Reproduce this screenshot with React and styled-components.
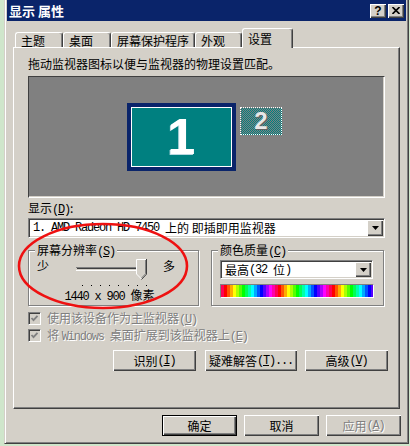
import React from 'react';
import styled, { createGlobalStyle } from 'styled-components';

const GlobalStyle = createGlobalStyle`
  html, body { margin: 0; padding: 0; }
  body {
    background: #cfe6cb;
    font-family: "Noto Sans CJK SC", "Noto Sans", sans-serif;
    font-size: 12px;
    color: #000;
  }
`;

const raised = `
  box-shadow: inset 1px 1px #fff, inset -1px -1px #404040, inset -2px -2px #808080;
`;

const sunken = `
  border: 1px solid;
  border-color: #808080 #fff #fff #808080;
  box-shadow: inset 1px 1px #404040, inset -1px -1px #d4d0c8;
`;

// rainbow stripes for the colour quality preview
const stripes = Array.from({ length: 18 }, (_, i) => {
  const h = (340 + i * 20) % 360;
  return `hsl(${h}, 100%, 50%) ${i * 3}px ${i * 3 + 3}px`;
}).join(', ');

const Window = styled.div`
  position: relative;
  box-sizing: border-box;
  width: 405px;
  height: 444px;
  margin-left: 4px;
  background: #d4d0c8;
  border-style: solid;
  border-width: 0 1px 1px 1px;
  border-color: #d4d0c8 #404040 #404040 #d4d0c8;
  box-shadow: inset 1px 0 #fff, inset -1px -1px #808080;
  padding: 0 2px 2px 2px;
  display: flex;
  flex-direction: column;
`;

const TitleBar = styled.div`
  box-sizing: border-box;
  height: 21px;
  background: #0a246a;
  display: flex;
  align-items: center;
  padding: 0 2px;
`;

const Title = styled.div`
  flex: 1;
  color: #fff;
  font-weight: bold;
  font-size: 13px;
  line-height: 15px;
  white-space: pre;
`;

const TitleButton = styled.div`
  box-sizing: border-box;
  width: 16px;
  height: 14px;
  background: #d4d0c8;
  ${raised}
  display: flex;
  align-items: center;
  justify-content: center;
  font-family: "Liberation Sans", Arial, sans-serif;
  font-weight: bold;
  font-size: 12px;
  line-height: 12px;
  & + & { margin-left: 2px; }
`;

const Body = styled.div`
  padding: 0 6px;
  display: flex;
  flex-direction: column;
`;

const TabRow = styled.div`
  display: flex;
  align-items: flex-end;
  height: 19px;
  margin-top: 7px;
  padding-left: 2px;
`;

const Tab = styled.div`
  position: relative;
  z-index: ${p => (p.$active ? 2 : 0)};
  box-sizing: border-box;
  width: ${p => p.$w}px;
  height: ${p => (p.$active ? 20 : 15)}px;
  margin-bottom: ${p => (p.$active ? -1 : 0)}px;
  padding: ${p => (p.$active ? 2 : 0)}px 0 0 5px;
  background: #d4d0c8;
  border-style: solid;
  border-width: 1px 1px 0 1px;
  border-color: #fff #404040 #fff #fff;
  border-radius: 3px 3px 0 0;
  box-shadow: inset -1px 0 #808080;
  line-height: 15px;
  white-space: nowrap;
`;

const Panel = styled.div`
  box-sizing: border-box;
  height: 362px;
  border: 1px solid;
  border-color: #fff #404040 #404040 #fff;
  box-shadow: inset -1px -1px #808080;
  padding: 0 14px;
  display: flex;
  flex-direction: column;
`;

const Desc = styled.div`
  margin-top: 9px;
  line-height: 14px;
`;

const MonitorArea = styled.div`
  position: relative;
  box-sizing: border-box;
  height: 122px;
  margin-top: 5px;
  background: #808080;
  border: 1px solid;
  border-color: #404040 #fff #fff #404040;
  box-shadow: inset -1px -1px #d4d0c8;
`;

const Monitor = styled.div`
  position: absolute;
  box-sizing: border-box;
  left: 98px;
  top: 26px;
  width: 109px;
  height: 68px;
  padding: 4px;
  background: #0a246a;
`;

const Screen = styled.div`
  box-sizing: border-box;
  height: 100%;
  border: 1px solid #fff;
  background: #008080;
  display: flex;
  align-items: center;
  justify-content: center;
  color: #fff;
  font-family: "Liberation Sans", Arial, sans-serif;
  font-weight: bold;
  font-size: 50px;
  line-height: 50px;
  text-shadow: -1px 1px 0 #b8d8e0;
`;

const GhostMonitor = styled.div`
  position: absolute;
  box-sizing: border-box;
  left: 211px;
  top: 30px;
  width: 42px;
  height: 28px;
  border: 1px dotted #fff;
  background: repeating-conic-gradient(#008080 0 25%, #808080 0 50%) 0 0 / 2px 2px;
  display: flex;
  align-items: center;
  justify-content: center;
  color: #e8e8e8;
  font-family: "Liberation Sans", Arial, sans-serif;
  font-weight: bold;
  font-size: 24px;
  line-height: 24px;
  text-shadow: 1px 1px 0 #606060;
`;

const FieldLabel = styled.div`
  margin-top: 3px;
  line-height: 14px;
`;

const Combo = styled.div`
  box-sizing: border-box;
  width: ${p => p.$w};
  height: ${p => p.$h}px;
  margin-top: ${p => p.$mt || 0}px;
  background: #fff;
  ${sunken}
  display: flex;
  align-items: stretch;
  padding: 1px 1px 1px 1px;
`;

const ComboText = styled.div`
  flex: 1;
  padding-left: 3px;
  display: flex;
  align-items: center;
  white-space: pre;
  overflow: hidden;
  line-height: 14px;
`;

const ComboButton = styled.div`
  box-sizing: border-box;
  width: 16px;
  background: #d4d0c8;
  ${raised}
  display: flex;
  align-items: center;
  justify-content: center;
`;

const Mono = styled.span`
  font-family: "Liberation Mono", "Courier New", monospace;
  font-size: 12px;
  letter-spacing: -1.2px;
`;

// accelerator key in brackets, e.g. (D)
const Acc = ({ k }) => (
  <Mono>(<u>{k}</u>)</Mono>
);

const GroupRow = styled.div`
  display: flex;
  gap: 12px;
  margin-top: 12px;
`;

const Group = styled.div`
  position: relative;
  box-sizing: border-box;
  width: ${p => p.$w}px;
  height: 56px;
  border: 1px solid #808080;
  box-shadow: 1px 1px 0 #fff, inset 1px 1px 0 #fff;
  padding: ${p => p.$pad};
`;

const Legend = styled.div`
  position: absolute;
  top: -8px;
  left: 6px;
  padding: 0 2px;
  background: #d4d0c8;
  line-height: 14px;
  white-space: nowrap;
`;

const SliderRow = styled.div`
  display: flex;
  align-items: flex-start;
  line-height: 14px;
`;

const SliderSvg = styled.svg`
  display: block;
  margin-left: 21px;
  margin-right: 13px;
`;

const ResText = styled.div`
  margin-top: 1px;
  text-align: center;
  line-height: 13px;
  padding-right: 16px;
`;

const ColorBar = styled.div`
  box-sizing: border-box;
  width: 154px;
  height: 14px;
  margin-top: 5px;
  border: 1px solid;
  border-color: #808080 #fff #fff #808080;
  background: repeating-linear-gradient(90deg, ${stripes});
`;

const CheckRow = styled.div`
  display: flex;
  align-items: center;
  gap: 6px;
  height: 13px;
  margin-top: ${p => p.$mt}px;
  color: #808080;
  text-shadow: 1px 1px 0 #fff;
  line-height: 13px;
  white-space: pre;
`;

const CheckBox = styled.div`
  box-sizing: border-box;
  width: 13px;
  height: 13px;
  background: #d4d0c8;
  ${sunken}
  display: flex;
  align-items: center;
  justify-content: center;
`;

const ButtonRow = styled.div`
  display: flex;
  justify-content: flex-end;
  margin-top: ${p => p.$mt}px;
  margin-right: ${p => p.$mr || 0}px;
`;

const Button = styled.div`
  box-sizing: border-box;
  width: ${p => p.$w}px;
  height: 21px;
  margin-left: ${p => p.$ml}px;
  background: #d4d0c8;
  border: ${p => (p.$default ? '1px solid #000' : 'none')};
  ${raised}
  display: flex;
  align-items: center;
  justify-content: center;
  line-height: 14px;
  white-space: pre;
  color: ${p => (p.$disabled ? '#808080' : '#000')};
  text-shadow: ${p => (p.$disabled ? '1px 1px 0 #fff' : 'none')};
`;

const Ring = styled.svg`
  position: absolute;
  left: 12px;
  top: 222px;
  pointer-events: none;
`;

const Arrow = () => (
  <svg width="7" height="4" viewBox="0 0 7 4">
    <polygon points="0,0 7,0 3.5,4" fill="#000" />
  </svg>
);

const Check = () => (
  <svg width="9" height="9" viewBox="0 0 9 9">
    <path d="M1.5 4 L3.5 6.2 L7.5 1.8" fill="none" stroke="#808080" strokeWidth="1.8" />
  </svg>
);

const Slider = () => (
  <SliderSvg width="80" height="28" viewBox="0 0 80 28">
    <rect x="6" y="8" width="70" height="1" fill="#808080" />
    <rect x="7" y="9" width="68" height="1" fill="#404040" />
    <rect x="7" y="10" width="68" height="1" fill="#d4d0c8" />
    <rect x="6" y="11" width="70" height="1" fill="#fff" />
    <g transform="translate(66 0)">
      <polygon points="0,0 11,0 11,15 5.5,20.5 0,15" fill="#d4d0c8" />
      <path d="M0.5 15 V0.5 H10" fill="none" stroke="#fff" />
      <path d="M0.5 15 L5.5 20" fill="none" stroke="#fff" />
      <path d="M10.5 0 V15.2 L5.5 20.5" fill="none" stroke="#404040" />
      <path d="M9.5 1 V14.8 L5.5 19" fill="none" stroke="#808080" />
    </g>
    {Array.from({ length: 8 }, (_, i) => (
      <rect key={i} x={Math.round(12 + i * 9.1)} y="26" width="1" height="1" fill="#000" />
    ))}
  </SliderSvg>
);

const tabs = [
  { label: '主题', w: 48 },
  { label: '桌面', w: 48 },
  { label: '屏幕保护程序', w: 84 },
  { label: '外观', w: 47 },
  { label: '设置', w: 51, active: true },
];

const App = () => (
  <>
    <GlobalStyle />
    <Window>
      <TitleBar>
        <Title>显示 属性</Title>
        <TitleButton>?</TitleButton>
        <TitleButton>
          <svg width="8" height="7" viewBox="0 0 8 7">
            <path d="M0.5 0 L7.5 7 M7.5 0 L0.5 7" stroke="#000" strokeWidth="1.6" />
          </svg>
        </TitleButton>
      </TitleBar>

      <Body>
        <TabRow>
          {tabs.map(t => (
            <Tab key={t.label} $w={t.w} $active={t.active}>{t.label}</Tab>
          ))}
        </TabRow>

        <Panel>
          <Desc>拖动监视器图标以便与监视器的物理设置匹配。</Desc>

          <MonitorArea>
            <Monitor>
              <Screen>1</Screen>
            </Monitor>
            <GhostMonitor>2</GhostMonitor>
          </MonitorArea>

          <FieldLabel>显示<Acc k="D" />:</FieldLabel>
          <Combo $w="100%" $h={20} $mt={1}>
            <ComboText><Mono>1. AMD Radeon HD 7450 </Mono>上的 即插即用监视器</ComboText>
            <ComboButton><Arrow /></ComboButton>
          </Combo>

          <GroupRow>
            <Group $w={171} $pad="8px 0 0 8px">
              <Legend>屏幕分辨率<Acc k="S" /></Legend>
              <SliderRow>
                <span>少</span>
                <Slider />
                <span>多</span>
              </SliderRow>
              <ResText><Mono>1440 x 900 </Mono>像素</ResText>
            </Group>
            <Group $w={173} $pad="9px 0 0 8px">
              <Legend>颜色质量<Acc k="C" /></Legend>
              <Combo $w="153px" $h={19}>
                <ComboText>最高<Mono>(32 </Mono>位<Mono>)</Mono></ComboText>
                <ComboButton><Arrow /></ComboButton>
              </Combo>
              <ColorBar />
            </Group>
          </GroupRow>

          <CheckRow $mt={6}>
            <CheckBox><Check /></CheckBox>
            <span>使用该设备作为主监视器<Acc k="U" /></span>
          </CheckRow>
          <CheckRow $mt={4}>
            <CheckBox><Check /></CheckBox>
            <span>将 <Mono>Windows </Mono>桌面扩展到该监视器上<Acc k="E" /></span>
          </CheckRow>

          <ButtonRow $mt={8} $mr={-3}>
            <Button $w={83} $ml={0}>识别<Acc k="I" /></Button>
            <Button $w={92} $ml={9}>疑难解答<Acc k="T" /><Mono>...</Mono></Button>
            <Button $w={83} $ml={8}>高级<Acc k="V" /></Button>
          </ButtonRow>
        </Panel>

        <ButtonRow $mt={6} $mr={-1}>
          <Button $w={75} $ml={0} $default>确定</Button>
          <Button $w={75} $ml={7}>取消</Button>
          <Button $w={75} $ml={7} $disabled>应用<Acc k="A" /></Button>
        </ButtonRow>
      </Body>

      <Ring width="172" height="88" viewBox="0 0 172 88">
        <ellipse cx="86" cy="44" rx="84" ry="42" fill="none" stroke="#ee1111" strokeWidth="2.6" />
      </Ring>
    </Window>
  </>
);

export default App;
